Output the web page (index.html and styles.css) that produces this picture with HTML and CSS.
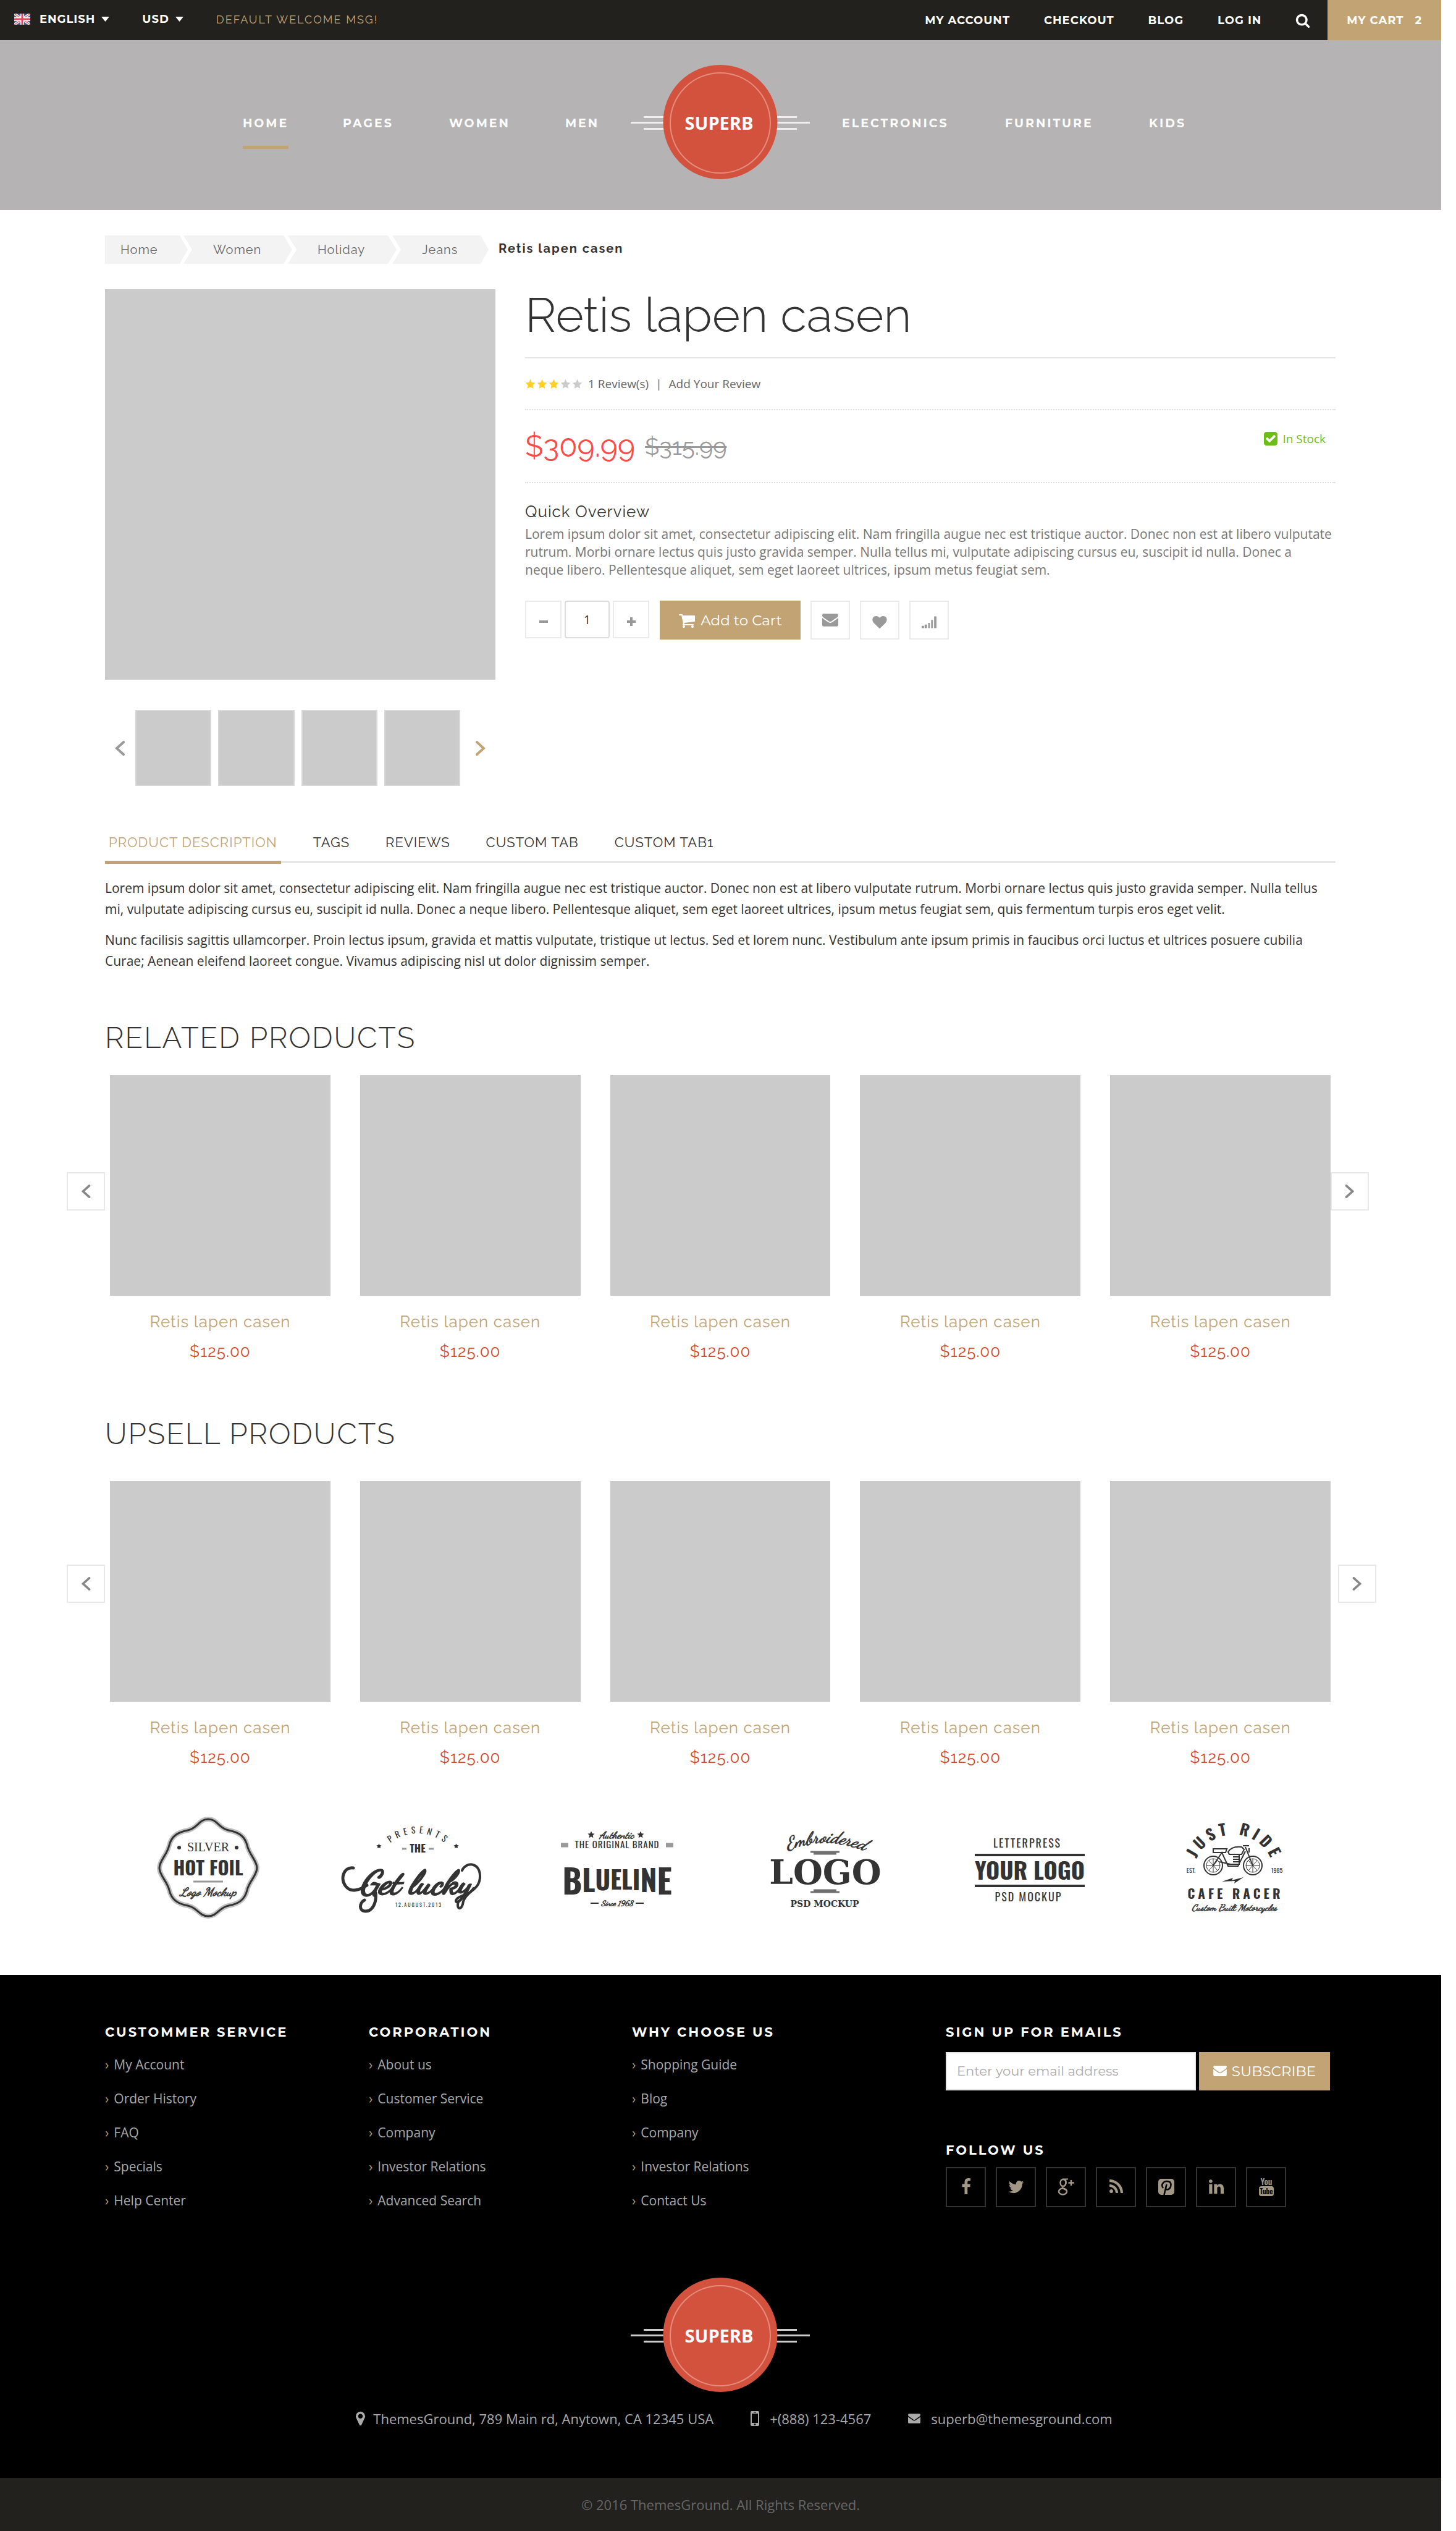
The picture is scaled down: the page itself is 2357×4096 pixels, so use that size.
FILE: index.html
```html
<!DOCTYPE html>
<html lang="en">
<head>
<meta charset="utf-8">
<title>Retis lapen casen - Superb</title>
<link rel="stylesheet" href="styles.css">
</head>
<body>
<svg class="sprite" aria-hidden="true">
  <symbol id="i-caret" viewBox="0 0 13 8"><path d="M0 0h13L6.500 8z"/></symbol>
  <symbol id="i-search" viewBox="0 0 1792 1792"><path d="M1216 832q0-185-131.500-316.500t-316.500-131.500-316.500 131.500-131.500 316.500 131.500 316.500 316.500 131.500 316.500-131.500 131.500-316.500zm512 832q0 52-38 90t-90 38q-54 0-90-38l-343-342q-179 124-399 124-143 0-273.500-55.500t-225-150-150-225-55.500-273.500 55.500-273.500 150-225 225-150 273.500-55.500 273.500 55.500 225 150 150 225 55.500 273.500q0 220-124 399l343 343q37 37 37 90z"/></symbol>
  <symbol id="i-cart" viewBox="0 0 1792 1792"><path d="M704 1536q0 52-38 90t-90 38-90-38-38-90 38-90 90-38 90 38 38 90zm896 0q0 52-38 90t-90 38-90-38-38-90 38-90 90-38 90 38 38 90zm128-1088v512q0 24-16.500 42.500t-40.500 21.500l-1044 122q13 60 13 70 0 16-24 64h920q26 0 45 19t19 45-19 45-45 19h-1024q-26 0-45-19t-19-45q0-11 8-31.500t16-36 21.500-40 15.500-29.500l-177-823h-204q-26 0-45-19t-19-45 19-45 45-19h256q16 0 28.500 6.500t19.500 15.500 13 24.500 8 26 5.500 29.500 4.500 26h1201q26 0 45 19t19 45z"/></symbol>
  <symbol id="i-mail" viewBox="0 256 1792 1408"><path d="M1792 710v794q0 66-47 113t-113 47h-1472q-66 0-113-47t-47-113v-794q44 49 101 87 362 246 497 345 57 42 92.500 65.500t94.500 48 110 24.500h2q51 0 110-24.500t94.500-48 92.500-65.500q170-123 498-345 57-39 100-87zm0-294q0 79-49 151t-122 123q-376 261-468 325-10 7-42.500 31t-54 38.500-52 32.500-57.500 27-50 9h-2q-23 0-50-9t-57.500-27-52-32.500-54-38.500-42.500-31q-91-64-262-182.500t-205-142.500q-62-42-117-115.500t-55-136.500q0-78 41.500-130t118.500-52h1472q65 0 112.500 47t47.500 113z"/></symbol>
  <symbol id="i-heart" viewBox="0 128 1792 1536"><path d="M896 1664q-26 0-44-18l-624-602q-10-8-27.500-26t-55.500-65.500-68-97.500-53.500-121-23.500-138q0-220 127-344t351-124q62 0 126.500 21.500t120 58 95.500 68.500 76 68q36-36 76-68t95.500-68.500 120-58 126.500-21.500q224 0 351 124t127 344q0 221-229 450l-623 600q-18 18-44 18z"/></symbol>
  <symbol id="i-signal" viewBox="0 0 25 20"><path d="M0 16h4v4H0zM5 14h4v6H5zM11 11h3v9h-3zM16 6h3v14h-3zM21 0h4v20h-4z"/></symbol>
  <symbol id="i-check" viewBox="128 128 1536 1536"><path d="M813 1299l614-614q19-19 19-45t-19-45l-102-102q-19-19-45-19t-45 19l-467 467-211-211q-19-19-45-19t-45 19l-102 102q-19 19-19 45t19 45l358 358q19 19 45 19t45-19zm851-883v960q0 119-84.500 203.500t-203.500 84.500h-960q-119 0-203.500-84.500t-84.500-203.500v-960q0-119 84.500-203.500t203.500-84.500h960q119 0 203.500 84.500t84.500 203.500z"/></symbol>
  <symbol id="i-star" viewBox="0 0 20 20"><path d="M10 1l2.800 5.900 6.400.8-4.700 4.500 1.200 6.400L10 15.500l-5.700 3.100 1.200-6.400L.8 7.700l6.400-.8z"/></symbol>
  <symbol id="i-left" viewBox="0 0 16 24"><path d="M14 2L3 12l11 10" fill="none" stroke="currentColor" stroke-width="4" stroke-linecap="round"/></symbol>
  <symbol id="i-right" viewBox="0 0 16 24"><path d="M2 2l11 10L2 22" fill="none" stroke="currentColor" stroke-width="4" stroke-linecap="round"/></symbol>
  <symbol id="i-minus" viewBox="0 0 16 16"><path d="M1 6h14v4H1z"/></symbol>
  <symbol id="i-plus" viewBox="0 0 16 16"><path d="M1 6h5V1h4v5h5v4h-5v5H6v-5H1z"/></symbol>
  <symbol id="i-pin" viewBox="384 128 1024 1536"><path d="M1152 640q0-106-75-181t-181-75-181 75-75 181 75 181 181 75 181-75 75-181zm256 0q0 109-33 179l-364 774q-16 33-47.500 52t-67.500 19-67.500-19-46.500-52l-365-774q-33-70-33-179 0-212 150-362t362-150 362 150 150 362z"/></symbol>
  <symbol id="i-phone" viewBox="0 0 14 24"><path fill-rule="evenodd" d="M2 0h10a2 2 0 0 1 2 2v20a2 2 0 0 1-2 2H2a2 2 0 0 1-2-2V2a2 2 0 0 1 2-2zM2 4v15h10V4zM5 1.500v1h4v-1zM7 20a1.500 1.500 0 1 0 0 3 1.500 1.500 0 0 0 0-3z"/></symbol>
  <symbol id="i-facebook" viewBox="0 0 1792 1792"><path d="M1343 12v264h-157q-86 0-116 36t-30 108v189h293l-39 296h-254v759h-306v-759h-255v-296h255v-218q0-186 104-288.500t277-102.500q147 0 228 12z"/></symbol>
  <symbol id="i-twitter" viewBox="0 0 1792 1792"><path d="M1684 408q-67 98-162 167 1 14 1 42 0 130-38 259.500t-115.500 248.500-184.500 210.500-258 146-323 54.500q-271 0-496-145 35 4 78 4 225 0 401-138-105-2-188-64.500t-114-159.500q33 5 61 5 43 0 85-11-112-23-185.500-111.500t-73.500-205.500v-4q68 38 146 41-66-44-105-115t-39-154q0-88 44-163 121 149 294.500 238.500t371.500 99.500q-8-38-8-74 0-134 94.500-228.500t228.500-94.500q140 0 236 102 109-21 205-78-37 115-142 178 93-10 186-50z"/></symbol>
  <symbol id="i-gplus" viewBox="0 0 28 28"><g fill="none" stroke="currentColor"><ellipse cx="9" cy="7.500" rx="4.500" ry="5.500" stroke-width="2.500"/><ellipse cx="8.500" cy="21.500" rx="6.500" ry="5" stroke-width="2.500"/><path d="M8 1.500h9M12.500 2q3 5-1 10l-3 2q-1.500 2 1 3l4 2" stroke-width="2"/><path d="M22 3v9M17.500 7.500h9.500" stroke-width="2.500"/></g></symbol>
  <symbol id="i-rss" viewBox="0 0 1792 1792"><path d="M576 1344q0 80-56 136t-136 56-136-56-56-136 56-136 136-56 136 56 56 136zm512 123q2 28-17 48-18 21-47 21h-135q-25 0-43-16.500t-20-41.500q-22-229-184.500-391.500t-391.500-184.500q-25-2-41.500-20t-16.500-43v-135q0-29 21-47 17-17 43-17h5q160 13 306 80.500t259 181.500q114 113 181.500 259t80.500 306zm512 2q2 27-18 47-18 20-46 20h-143q-26 0-44.500-17.500t-19.500-42.500q-12-215-101-408.500t-231.500-336-336-231.500-408.500-102q-25-1-42.500-19.500t-17.500-43.500v-143q0-28 20-46 18-18 44-18h3q262 13 501.500 120t425.500 294q187 186 294 425.500t120 501.500z"/></symbol>
  <symbol id="i-pinterest" viewBox="0 0 28 28"><rect x="1" y="1" width="26" height="26" rx="5"/><path d="M9 16q-3-4-1-7 2-4 7-4 6 0 6.500 5 0 6-4 8-3 1-4.500-1M14.500 10l-4 17" fill="none" stroke="#000" stroke-width="2.600"/></symbol>
  <symbol id="i-linkedin" viewBox="0 0 1792 1792"><path d="M477 625v991h-330v-991h330zm21-306q1 73-50.500 122t-135.500 49h-2q-82 0-132-49t-50-122q0-74 51.500-122.500t134.500-48.500 133 48.500 51 122.500zm1166 729v568h-329v-530q0-105-40.500-164.500t-126.500-59.500q-63 0-105.500 34.500t-63.500 85.500q-11 30-11 81v553h-329q2-399 2-647t-1-296l-1-48h329v144h-2q20-32 41-56t56.500-52 87-43.500 114.500-15.500q171 0 275 113.500t104 332.500z"/></symbol>
</svg>

<div class="topbar">
  <div class="topbar-left">
    <button class="picker" type="button">
      <svg class="flag" viewBox="0 0 26 18" aria-hidden="true"><path fill="#4a5fa5" d="M0 0h26v18H0z"/><path d="M0 0l26 18M26 0L0 18" stroke="#fff" stroke-width="4"/><path d="M0 0l26 18M26 0L0 18" stroke="#e0707c" stroke-width="1.500"/><path d="M13 0v18M0 9h26" stroke="#fff" stroke-width="6"/><path d="M13 0v18M0 9h26" stroke="#e04a5a" stroke-width="3"/></svg>
      English <svg class="caret" aria-hidden="true"><use href="#i-caret"/></svg>
    </button>
    <button class="picker picker-currency" type="button">USD <svg class="caret" aria-hidden="true"><use href="#i-caret"/></svg></button>
    <span class="welcome">Default welcome msg!</span>
  </div>
  <nav class="topbar-links">
    <a href="#">My Account</a>
    <a href="#">Checkout</a>
    <a href="#">Blog</a>
    <a href="#">Log In</a>
    <button class="search" type="button" aria-label="Search"><svg aria-hidden="true"><use href="#i-search"/></svg></button>
    <a class="mini-cart" href="#"><span>My Cart</span><span>2</span></a>
  </nav>
</div>

<header class="header">
  <nav class="menu">
    <a class="active" href="#">Home</a>
    <a href="#">Pages</a>
    <a href="#">Women</a>
    <a href="#">Men</a>
    <a class="menu-logo" href="#">
      <svg class="logo" viewBox="0 0 290 185">
        <path d="M0 93.500h290M21 84.500h248M21 103.500h248" stroke="#fff" stroke-width="3" opacity=".8"/>
        <circle cx="145" cy="92.500" r="92.500" fill="#d2523e"/>
        <circle cx="145" cy="94" r="81" fill="none" stroke="#e68c7e" stroke-width="2"/>
        <text x="143" y="105">SUPERB</text>
      </svg>
    </a>
    <a href="#">Electronics</a>
    <a href="#">Furniture</a>
    <a href="#">Kids</a>
  </nav>
</header>

<main class="wrap">
  <nav class="crumbs">
    <a href="#">Home</a>
    <a href="#">Women</a>
    <a href="#">Holiday</a>
    <a href="#">Jeans</a>
    <strong>Retis lapen casen</strong>
  </nav>

  <section class="product">
    <div class="gallery">
      <div class="photo"></div>
      <div class="thumbs">
        <button class="thumb-nav" type="button" aria-label="Previous"><svg aria-hidden="true"><use href="#i-left"/></svg></button>
        <div class="thumb"></div>
        <div class="thumb"></div>
        <div class="thumb"></div>
        <div class="thumb"></div>
        <button class="thumb-nav next" type="button" aria-label="Next"><svg aria-hidden="true"><use href="#i-right"/></svg></button>
      </div>
    </div>
    <div class="details">
      <h1>Retis lapen casen</h1>
      <div class="rating">
        <span class="stars" role="img" aria-label="3 of 5 stars"><svg><use href="#i-star"/></svg><svg><use href="#i-star"/></svg><svg><use href="#i-star"/></svg><svg class="off"><use href="#i-star"/></svg><svg class="off"><use href="#i-star"/></svg></span>
        <a href="#">1 Review(s)</a><span class="bar">|</span><a href="#">Add Your Review</a>
      </div>
      <div class="prices">
        <span class="price">$309.99</span>
        <del>$315.99</del>
        <span class="stock"><svg aria-hidden="true"><use href="#i-check"/></svg>In Stock</span>
      </div>
      <h2 class="overview-title">Quick Overview</h2>
      <p class="overview">Lorem ipsum dolor sit amet, consectetur adipiscing elit. Nam fringilla augue nec est tristique auctor. Donec non est at libero vulputate rutrum. Morbi ornare lectus quis justo gravida semper. Nulla tellus mi, vulputate adipiscing cursus eu, suscipit id nulla. Donec a neque&nbsp;libero. Pellentesque aliquet, sem eget laoreet ultrices, ipsum metus feugiat sem.</p>
      <form class="buy">
        <button class="step" type="button" aria-label="Decrease"><svg aria-hidden="true"><use href="#i-minus"/></svg></button>
        <input class="qty" type="text" value="1" aria-label="Quantity">
        <button class="step" type="button" aria-label="Increase"><svg aria-hidden="true"><use href="#i-plus"/></svg></button>
        <button class="add" type="button"><svg aria-hidden="true"><use href="#i-cart"/></svg>Add to Cart</button>
        <button class="extra" type="button" aria-label="Email"><svg aria-hidden="true"><use href="#i-mail"/></svg></button>
        <button class="extra low" type="button" aria-label="Wishlist"><svg aria-hidden="true"><use href="#i-heart"/></svg></button>
        <button class="extra low" type="button" aria-label="Compare"><svg aria-hidden="true"><use href="#i-signal"/></svg></button>
      </form>
    </div>
  </section>

  <nav class="tabs">
    <a class="active" href="#">Product Description</a>
    <a href="#">Tags</a>
    <a href="#">Reviews</a>
    <a href="#">Custom Tab</a>
    <a href="#">Custom Tab1</a>
  </nav>
  <div class="description">
    <p>Lorem ipsum dolor sit amet, consectetur adipiscing elit. Nam fringilla augue nec est tristique auctor. Donec non est at libero vulputate rutrum. Morbi ornare lectus quis justo gravida semper. Nulla tellus mi, vulputate adipiscing cursus eu, suscipit id nulla. Donec a neque libero. Pellentesque aliquet, sem eget laoreet ultrices, ipsum metus feugiat sem, quis fermentum turpis eros eget velit.</p>
    <p>Nunc facilisis sagittis ullamcorper. Proin lectus ipsum, gravida et mattis vulputate, tristique ut lectus. Sed et lorem nunc. Vestibulum ante ipsum primis in faucibus orci luctus et ultrices posuere cubilia Curae; Aenean eleifend laoreet congue. Vivamus adipiscing nisl ut dolor dignissim semper.</p>
  </div>

  <section class="shelf related">
    <h2>Related Products</h2>
    <div class="carousel">
      <button class="slide" type="button" aria-label="Previous"><svg aria-hidden="true"><use href="#i-left"/></svg></button>
      <ul class="cards">
        <li><div class="pic"></div><a href="#">Retis lapen casen</a><span>$125.00</span></li>
        <li><div class="pic"></div><a href="#">Retis lapen casen</a><span>$125.00</span></li>
        <li><div class="pic"></div><a href="#">Retis lapen casen</a><span>$125.00</span></li>
        <li><div class="pic"></div><a href="#">Retis lapen casen</a><span>$125.00</span></li>
        <li><div class="pic"></div><a href="#">Retis lapen casen</a><span>$125.00</span></li>
      </ul>
      <button class="slide" type="button" aria-label="Next"><svg aria-hidden="true"><use href="#i-right"/></svg></button>
    </div>
  </section>

  <section class="shelf upsell">
    <h2>Upsell Products</h2>
    <div class="carousel">
      <button class="slide" type="button" aria-label="Previous"><svg aria-hidden="true"><use href="#i-left"/></svg></button>
      <ul class="cards">
        <li><div class="pic"></div><a href="#">Retis lapen casen</a><span>$125.00</span></li>
        <li><div class="pic"></div><a href="#">Retis lapen casen</a><span>$125.00</span></li>
        <li><div class="pic"></div><a href="#">Retis lapen casen</a><span>$125.00</span></li>
        <li><div class="pic"></div><a href="#">Retis lapen casen</a><span>$125.00</span></li>
        <li><div class="pic"></div><a href="#">Retis lapen casen</a><span>$125.00</span></li>
      </ul>
      <button class="slide" type="button" aria-label="Next"><svg aria-hidden="true"><use href="#i-right"/></svg></button>
    </div>
  </section>

  <div class="brands">
    <svg viewBox="0 0 332 180">
      <path class="line" stroke-width="3" d="M167 9C182 9 184 24 200 27C216 30 226 36 230 51C233 66 246 76 246 88C246 100 233 110 230 124C226 140 216 146 200 149C184 152 182 166 167 166C152 166 150 152 134 149C118 146 108 140 104 124C101 110 88 100 88 88C88 76 101 66 104 51C108 36 118 30 134 27C150 24 152 9 167 9Z"/>
      <path class="line" stroke-width="8" opacity=".3" d="M167 9C182 9 184 24 200 27C216 30 226 36 230 51C233 66 246 76 246 88C246 100 233 110 230 124C226 140 216 146 200 149C184 152 182 166 167 166C152 166 150 152 134 149C118 146 108 140 104 124C101 110 88 100 88 88C88 76 101 66 104 51C108 36 118 30 134 27C150 24 152 9 167 9Z"/>
      <circle cx="120" cy="55" r="3"/><circle cx="213" cy="55" r="3"/>
      <text class="serif" x="167" y="61" font-size="20">SILVER</text>
      <text class="narrow" x="167" y="100" font-size="31">HOT FOIL</text>
      <path class="line" stroke-width="3" opacity=".5" d="M143 110h48"/>
      <text class="script heavy" x="167" y="133" font-size="19">Logo Mockup</text>
    </svg>
    <svg viewBox="0 0 332 180">
      <path id="arc-presents" fill="none" d="M104 102A70 70 0 0 1 244 102"/>
      <text class="sans" font-size="14" letter-spacing="6"><textPath href="#arc-presents" startOffset="51%">PRESENTS</textPath></text>
      <use href="#i-star" x="107" y="48" width="9" height="9"/><use href="#i-star" x="232" y="48" width="9" height="9"/>
      <text class="narrow" x="174" y="63" font-size="17">THE</text>
      <path class="line" stroke-width="3" opacity=".5" d="M149 57h7M192 57h8"/>
      <text class="script heaviest" x="170" y="129" font-size="54">Get lucky</text>
      <path class="line" stroke-width="5" stroke-linecap="round" d="M70 88C54 86 48 106 58 118C66 128 80 124 92 116M106 128C108 146 100 158 90 158C78 158 80 144 88 140"/>
      <path class="line" stroke-width="4" stroke-linecap="round" d="M246 92C252 78 274 78 275 100C276 124 254 124 248 142C246 158 236 156 240 142"/>
      <text class="sans" x="176" y="151" font-size="8" letter-spacing="2">12.AUGUST.2013</text>
    </svg>
    <svg viewBox="0 0 332 180">
      <text class="script heavy" x="164" y="40" font-size="16">Authentic</text>
      <use href="#i-star" x="117" y="28" width="12" height="12"/><use href="#i-star" x="197" y="28" width="12" height="12"/>
      <text class="sans" x="165" y="56" font-size="15" letter-spacing="1">THE ORIGINAL BRAND</text>
      <path class="line" stroke-width="7" opacity=".5" d="M74 51h12M244 51h12"/>
      <text class="narrow" x="165" y="122" font-size="42"><tspan font-size="54" dy="9">B</tspan><tspan font-size="48" dy="-4">L</tspan><tspan font-size="42" dy="-3">U</tspan><tspan font-size="40" dy="-1">E</tspan><tspan font-size="40">L</tspan><tspan font-size="42" dy="1">I</tspan><tspan font-size="48" dy="3">N</tspan><tspan font-size="54" dy="4">E</tspan></text>
      <text class="script heavy" x="165" y="149" font-size="12">Since 1968</text>
      <path class="line" stroke-width="2" d="M122 145h13M195 145h13"/>
    </svg>
    <svg viewBox="0 0 332 180">
      <path id="arc-emb" fill="none" d="M96 66Q168 28 246 66"/>
      <text class="script heavy" font-size="28"><textPath href="#arc-emb" startOffset="50%">Embroidered</textPath></text>
      <path class="line" stroke-width="3" opacity=".7" d="M146 62h47M151 65h37M151 124h37M146 127h47"/>
      <text class="slab" x="170" y="114" font-size="55">LOGO</text>
      <text class="slab" x="169" y="151" font-size="14">PSD MOCKUP</text>
    </svg>
    <svg viewBox="0 0 332 180">
      <text class="sans" x="165" y="55" font-size="18" letter-spacing="2">LETTERPRESS</text>
      <path class="line" stroke-width="4" d="M80 67h178M80 117h178"/>
      <text class="narrow" x="169" y="107" font-size="38">YOUR LOGO</text>
      <text class="sans" x="167" y="142" font-size="18" letter-spacing="2">PSD MOCKUP</text>
    </svg>
    <svg viewBox="0 0 332 180">
      <path id="arc-ride" fill="none" d="M101 100A66 66 0 0 1 233 100"/>
      <text class="bold" font-size="25" letter-spacing="6"><textPath href="#arc-ride" startOffset="51%">JUST RIDE</textPath></text>
      <g class="line" stroke-width="2"><circle cx="134" cy="84" r="15"/><circle cx="134" cy="84" r="11" stroke-width="1"/><circle cx="198" cy="84" r="15"/><circle cx="198" cy="84" r="11" stroke-width="1"/><path stroke-width="1" d="M134 73v22M123 84h22M127 76l14 16M127 92l14-16M198 73v22M187 84h22M191 76l14 16M191 92l14-16"/><path d="M134 84l14-21 10 22h16l12-24M198 84l-12-30M134 57h22l-2 6h-20zM158 62q6-10 22-8l4 4-4 8h-20zM182 52h10M192 56v7M164 66h12v16h-14l-18-4M166 70h10M166 74h10M166 78h10"/></g>
      <path d="M148 110l18-6-2 4 19-5-15 10 1-4z"/>
      <text class="sans" x="98" y="96" font-size="10">EST.</text><text class="sans" x="237" y="96" font-size="10">1985</text>
      <text class="bold" x="170" y="138" font-size="21" letter-spacing="5">CAFE RACER</text>
      <text class="script heavy" x="168" y="157" font-size="15">Custom Built Motorcycles</text>
    </svg>
  </div>
</main>

<footer class="footer">
  <div class="wrap">
    <div class="footer-cols">
      <section>
        <h3>Custommer Service</h3>
        <ul class="links">
          <li><a href="#">My Account</a></li>
          <li><a href="#">Order History</a></li>
          <li><a href="#">FAQ</a></li>
          <li><a href="#">Specials</a></li>
          <li><a href="#">Help Center</a></li>
        </ul>
      </section>
      <section>
        <h3>Corporation</h3>
        <ul class="links">
          <li><a href="#">About us</a></li>
          <li><a href="#">Customer Service</a></li>
          <li><a href="#">Company</a></li>
          <li><a href="#">Investor Relations</a></li>
          <li><a href="#">Advanced Search</a></li>
        </ul>
      </section>
      <section>
        <h3>Why Choose Us</h3>
        <ul class="links">
          <li><a href="#">Shopping Guide</a></li>
          <li><a href="#">Blog</a></li>
          <li><a href="#">Company</a></li>
          <li><a href="#">Investor Relations</a></li>
          <li><a href="#">Contact Us</a></li>
        </ul>
      </section>
      <section>
        <h3><label for="email">Sign up for emails</label></h3>
        <form class="newsletter">
          <input id="email" type="email" placeholder="Enter your email address">
          <button type="button"><svg aria-hidden="true"><use href="#i-mail"/></svg>SUBSCRIBE</button>
        </form>
        <h3 class="follow">Follow us</h3>
        <div class="social">
          <a href="#" aria-label="Facebook"><svg><use href="#i-facebook"/></svg></a>
          <a href="#" aria-label="Twitter"><svg><use href="#i-twitter"/></svg></a>
          <a href="#" aria-label="Google Plus"><svg><use href="#i-gplus"/></svg></a>
          <a href="#" aria-label="RSS"><svg><use href="#i-rss"/></svg></a>
          <a href="#" aria-label="Pinterest"><svg><use href="#i-pinterest"/></svg></a>
          <a href="#" aria-label="LinkedIn"><svg><use href="#i-linkedin"/></svg></a>
          <a href="#" aria-label="YouTube"><svg class="youtube" viewBox="0 -6 28 44"><text x="14" y="13">You</text><rect x="2" y="15" width="24" height="16" rx="4"/><text class="tube" x="14" y="28">Tube</text></svg></a>
        </div>
      </section>
    </div>
    <a class="footer-logo" href="#">
      <svg class="logo" viewBox="0 0 290 185">
        <path d="M0 93.500h290M21 84.500h248M21 103.500h248" stroke="#fff" stroke-width="3" opacity=".8"/>
        <circle cx="145" cy="92.500" r="92.500" fill="#d2523e"/>
        <circle cx="145" cy="94" r="81" fill="none" stroke="#e68c7e" stroke-width="2"/>
        <text x="143" y="105">SUPERB</text>
      </svg>
    </a>
    <address class="contact">
      <span><svg class="pin" aria-hidden="true"><use href="#i-pin"/></svg>ThemesGround, 789 Main rd, Anytown, CA 12345 USA</span>
      <span><svg class="phone" aria-hidden="true"><use href="#i-phone"/></svg>+(888) 123-4567</span>
      <a href="mailto:superb@themesground.com"><svg class="mail" aria-hidden="true"><use href="#i-mail"/></svg>superb@themesground.com</a>
    </address>
  </div>
  <div class="copyright">© 2016 ThemesGround. All Rights Reserved.</div>
</footer>
</body>
</html>
```
FILE: styles.css
```css
* { box-sizing: border-box; }

:root {
  --gold: #c2a374;
  --dark: #23211e;
  --grey: #cbcbcb;
  --display: Raleway, Lato, sans-serif;
  --label: Montserrat, Inter, sans-serif;
  --text: "Open Sans", "Noto Sans", sans-serif;
  --condensed: Oswald, "Open Sans Condensed", "Roboto Condensed", "Open Sans", sans-serif;
}

body {
  margin: 0;
  padding-right: 24px;
  background: #fff;
  color: #333;
  font-family: var(--text);
  font-size: 21px;
}

a { color: inherit; text-decoration: none; }
h1, h2, h3, p, ul { margin: 0; padding: 0; }
ul { list-style: none; }
button { padding: 0; border: 0; background: none; color: inherit; font: inherit; cursor: pointer; }
svg { display: block; fill: currentColor; }
.sprite { position: absolute; width: 0; height: 0; }
.wrap { margin: 0 171px 0 170px; }

/* Top bar */
.topbar {
  display: flex;
  justify-content: space-between;
  height: 65px;
  background: var(--dark);
  color: #fff;
  font-family: var(--label);
  font-size: 18px;
  font-weight: 700;
  letter-spacing: 1px;
  text-transform: uppercase;
}
.topbar-left { display: flex; align-items: center; height: 62px; padding-left: 23px; }
.picker { display: flex; align-items: center; gap: 10px; letter-spacing: inherit; text-transform: inherit; }
.picker-currency { margin-left: 53px; }
.flag { width: 26px; height: 18px; margin-right: 5px; }
.caret { width: 13px; height: 8px; }
.welcome { margin-left: 53px; color: var(--gold); font-family: var(--display); font-weight: 400; letter-spacing: 2px; }
.topbar-links { display: flex; align-items: center; gap: 55px; }
.search svg { width: 24px; height: 24px; }
.mini-cart { display: flex; align-items: center; gap: 18px; height: 65px; margin-left: -27px; padding: 0 31px; background: var(--gold); }

/* Header */
.header { display: flex; align-items: center; justify-content: center; height: 275px; padding-right: 20px; background: #b5b3b4; }
.menu {
  display: grid;
  grid-template-columns: 162px 172px 188px 106px 342px 264px 233px auto;
  align-items: center;
  justify-items: start;
  color: #fff;
  font-family: var(--label);
  font-size: 19px;
  font-weight: 700;
  letter-spacing: 3px;
  line-height: 72px;
  text-transform: uppercase;
}
.menu a { border-bottom: 5px solid transparent; }
.menu .active { border-color: var(--gold); }
.menu .menu-logo { padding-bottom: 5px; }
.logo { width: 290px; height: 185px; fill: #fff; font: 700 29px var(--text); letter-spacing: 0; text-anchor: middle; }

/* Breadcrumbs */
.crumbs { display: flex; align-items: center; height: 46px; margin-top: 41px; color: #666; font-family: var(--display); font-size: 20px; letter-spacing: 1px; line-height: 46px; }
.crumbs a { width: 176px; margin-right: -7px; padding-left: 48px; background: #f3f3f3; clip-path: polygon(0 0, 162px 0, 100% 50%, 162px 100%, 0 100%, 14px 50%); }
.crumbs a:first-child { width: 134px; padding-left: 25px; clip-path: polygon(0 0, 121px 0, 100% 50%, 121px 100%, 0 100%); }
.crumbs a:last-of-type { width: 156px; clip-path: polygon(0 0, 143px 0, 100% 50%, 143px 100%, 0 100%, 14px 50%); }
.crumbs strong { height: 50px; margin-left: 23px; color: #333; letter-spacing: 2px; }

/* Product */
.product { display: grid; grid-template-columns: 632px minmax(0, 1fr); gap: 48px; margin-top: 41px; }
.photo { aspect-ratio: 1; background: var(--grey); }
.thumbs { display: flex; align-items: center; gap: 11px; margin-top: 49px; padding: 0 16px; }
.thumb { flex: 1; aspect-ratio: 1; border: 2px solid #d8d8d8; background: var(--grey); }
.thumb-nav { width: 22px; color: #999; }
.thumb-nav svg { width: 16px; height: 24px; }
.thumb-nav.next { width: 30px; padding-left: 14px; color: var(--gold); }

h1 { padding-bottom: 26px; border-bottom: 2px solid #e5e5e5; font: 300 78px/84px var(--display); }
.rating { display: flex; align-items: center; height: 84px; border-bottom: 2px dotted #ddd; color: #666; font-size: 19px; }
.stars { display: flex; gap: 2px; margin-right: 9px; color: #ffd022; }
.stars svg { width: 17px; height: 17px; }
.stars .off { color: #ccc; }
.bar { margin: 0 11px; }
.prices { display: flex; align-items: center; gap: 16px; height: 118px; border-bottom: 2px dotted #ddd; font-family: var(--display); }
.price { color: #ff4a48; font-size: 48px; }
del { color: #999; font-size: 38px; }
.stock { display: flex; align-items: center; align-self: flex-start; gap: 8px; margin: 32px 16px 0 auto; color: #6cbe17; font: 19px/28px var(--text); }
.stock svg { width: 22px; height: 22px; }
.overview-title { margin-top: 28px; font: 400 26px/36px var(--display); letter-spacing: 1px; }
.overview { margin-top: 4px; color: #777; line-height: 29px; }
.buy { display: flex; gap: 5px; margin-top: 35px; color: #999; }
.step { display: flex; align-items: center; justify-content: center; width: 59px; height: 61px; border: 2px solid #ebebeb; }
.step svg { width: 16px; height: 16px; margin-top: 6px; }
.qty { width: 73px; height: 61px; border: 2px solid #ddd; border-radius: 4px; color: #333; font: 20px var(--text); text-align: center; }
.add { display: flex; align-items: center; justify-content: center; gap: 8px; width: 228px; height: 63px; margin-left: 12px; background: var(--gold); color: #fff; font-family: var(--label); font-size: 23px; }
.add svg { width: 28px; height: 28px; }
.extra { display: flex; align-items: center; justify-content: center; width: 64px; height: 63px; margin-left: 11px; border: 2px solid #ebebeb; }
.extra svg { width: 26px; height: 21px; }
.extra.low svg { width: 24px; height: 20px; margin-top: 7px; }

/* Tabs */
.tabs { display: flex; gap: 46px; height: 63px; margin-top: 61px; border-bottom: 2px solid #ddd; font: 400 22px/60px var(--display); letter-spacing: 1px; text-transform: uppercase; }
.tabs a { height: 65px; padding: 0 6px; }
.tabs .active { border-bottom: 5px solid var(--gold); color: var(--gold); }
.description { display: grid; gap: 16px; margin-top: 24px; line-height: 34px; }

/* Product shelves */
.shelf h2 { font: 300 47px/60px var(--display); letter-spacing: 2px; text-transform: uppercase; }
.related h2 { margin: 78px 0 30px; }
.upsell h2 { margin: 86px 0 46px; }
.carousel { display: flex; align-items: flex-start; margin: 0 -66px 0 -62px; }
.cards { flex: 1; display: grid; grid-template-columns: repeat(5, minmax(0, 1fr)); gap: 48px; padding: 0 12px 0 8px; }
.related .carousel { margin-right: -54px; }
.related .cards { padding-right: 0; }
.cards li { display: flex; flex-direction: column; align-items: center; font-family: var(--display); font-size: 26px; line-height: 36px; letter-spacing: 1px; }
.pic { width: 100%; aspect-ratio: 1; margin-bottom: 24px; background: var(--grey); }
.cards a { margin-bottom: 12px; color: var(--gold); }
.cards span { color: #d2492a; }
.slide { display: flex; align-items: center; justify-content: center; width: 62px; height: 62px; border: 2px solid #e8e8e8; color: #888; }
.slide svg { width: 16px; height: 22px; }
.related .slide { margin-top: 157px; }
.upsell .slide { margin-top: 135px; }

/* Brand marks */
.brands { display: grid; grid-template-columns: repeat(6, minmax(0, 1fr)); margin: 73px 0 81px; }
.brands svg { width: 100%; fill: #333; }
.brands text { text-anchor: middle; }
.line { fill: none; stroke: #333; }
.serif { font-family: "Liberation Serif", serif; }
.slab { font-family: "DejaVu Serif", serif; font-weight: 700; }
.narrow, .bold { font-family: var(--condensed); font-weight: 700; }
.sans { font-family: var(--condensed); }
.script { font-family: "Dancing Script", Pacifico, Lobster, "Liberation Serif", serif; font-style: italic; font-weight: 700; }
.heavy { stroke: #333; stroke-width: .5px; }
.heaviest { stroke: #333; stroke-width: 2px; }

/* Footer */
.footer { background: #000; color: #aaa; }
.footer .wrap { padding: 78px 0 79px; }
.footer-cols { display: grid; grid-template-columns: 427px 426px 508px minmax(0, 1fr); }
h3 { color: #fff; font: 700 21px/30px var(--label); letter-spacing: 3px; text-transform: uppercase; }
.links { margin-top: 10px; line-height: 55px; }
.links a::before { content: "›"; margin-right: 8px; color: #b09a78; }
.newsletter { display: flex; gap: 5px; margin-top: 17px; }
.newsletter input { width: 405px; height: 62px; padding: 0 16px; border: 2px solid #e5e5e5; background: #fff; font: 21px var(--label); }
.newsletter input::placeholder { color: #aaa; }
.newsletter button { display: flex; align-items: center; justify-content: center; gap: 8px; width: 212px; height: 62px; background: var(--gold); color: #fff; font: 23px var(--label); }
.newsletter svg { width: 22px; height: 17px; }
.follow { margin: 82px 0 12px; }
.social { display: flex; gap: 16px; color: #a39786; }
.social a { display: flex; align-items: center; justify-content: center; width: 65px; height: 65px; border: 2px solid #333; }
.social svg { width: 28px; height: 28px; }
.social .youtube { height: 44px; font: 500 14px var(--condensed); text-anchor: middle; }
.tube { font-size: 12px; fill: #000; }
.footer-logo { display: flex; justify-content: center; margin-top: 97px; }
.contact { display: flex; justify-content: center; gap: 60px; margin-top: 26px; padding-left: 45px; font-size: 22px; font-style: normal; line-height: 34px; }
.contact span, .contact a { display: flex; align-items: center; gap: 17px; }
.contact .pin { width: 15px; height: 24px; margin-right: -4px; }
.phone { width: 14px; height: 24px; }
.mail { width: 20px; height: 16px; }
.copyright { height: 86px; background: var(--dark); color: #666; font-size: 22px; line-height: 86px; text-align: center; }
```
